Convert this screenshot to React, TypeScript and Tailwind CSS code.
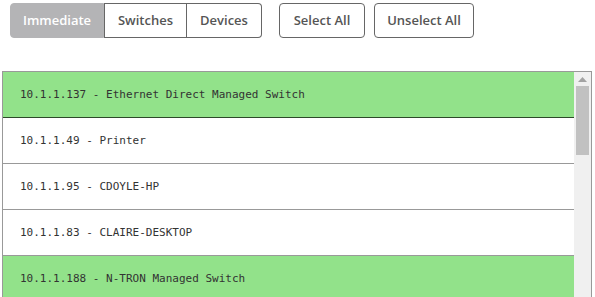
import React from 'react';

const rows = [
  { label: '10.1.1.137 - Ethernet Direct Managed Switch', on: true },
  { label: '10.1.1.49 - Printer', on: false },
  { label: '10.1.1.95 - CDOYLE-HP', on: false },
  { label: '10.1.1.83 - CLAIRE-DESKTOP', on: false },
  { label: '10.1.1.188 - N-TRON Managed Switch', on: true },
];

const btn =
  'h-[35px] flex items-center justify-center text-[13px] font-semibold text-[#555] bg-white';

export default function App() {
  return (
    <div className="w-[595px] h-[297px] overflow-hidden bg-white font-['Open_Sans',sans-serif]">
      <div className="flex items-center pt-[3px] pl-[10px]">
        <div className="flex">
          <button className="h-[35px] w-[94px] flex items-center justify-center text-[13px] font-semibold text-white bg-[#b4b4b6] border border-[#b4b4b6] rounded-l-[4px]">
            Immediate
          </button>
          <button className={`${btn} w-[83px] border border-[#666]`}>Switches</button>
          <button className={`${btn} w-[75px] border border-l-0 border-[#666] rounded-r-[4px]`}>Devices</button>
        </div>
        <button className={`${btn} ml-[17px] w-[86px] border border-[#666] rounded-[4px]`}>Select All</button>
        <button className={`${btn} ml-[9px] w-[100px] border border-[#666] rounded-[4px]`}>Unselect All</button>
      </div>

      <div className="ml-[2px] mt-[33px] w-[590px] h-[226px] border border-[#999] border-b-0 flex overflow-hidden">
        <div className="flex-1 flex flex-col">
          {rows.map((r, i) => (
            <div
              key={i}
              className={`h-[46px] shrink-0 flex items-center pl-[17px] pt-[2px] border-b font-['DejaVu_Sans_Mono',monospace] text-[11px] text-[#333] ${
                r.on ? 'bg-[#92e28a]' : 'bg-white'
              } ${i === 0 ? 'border-[#2d4a2a]' : 'border-[#999]'}`}
            >
              {r.label}
            </div>
          ))}
        </div>
        <div className="w-[17px] bg-[#f0f0f0] flex flex-col items-center">
          <svg width="9" height="5" viewBox="0 0 9 5" className="mt-[5px]">
            <path d="M0 5 L4.5 0 L9 5 Z" fill="#a3a3a3" />
          </svg>
          <div className="mt-[4px] w-[13px] h-[69px] bg-[#c1c1c1]" />
        </div>
      </div>
    </div>
  );
}
